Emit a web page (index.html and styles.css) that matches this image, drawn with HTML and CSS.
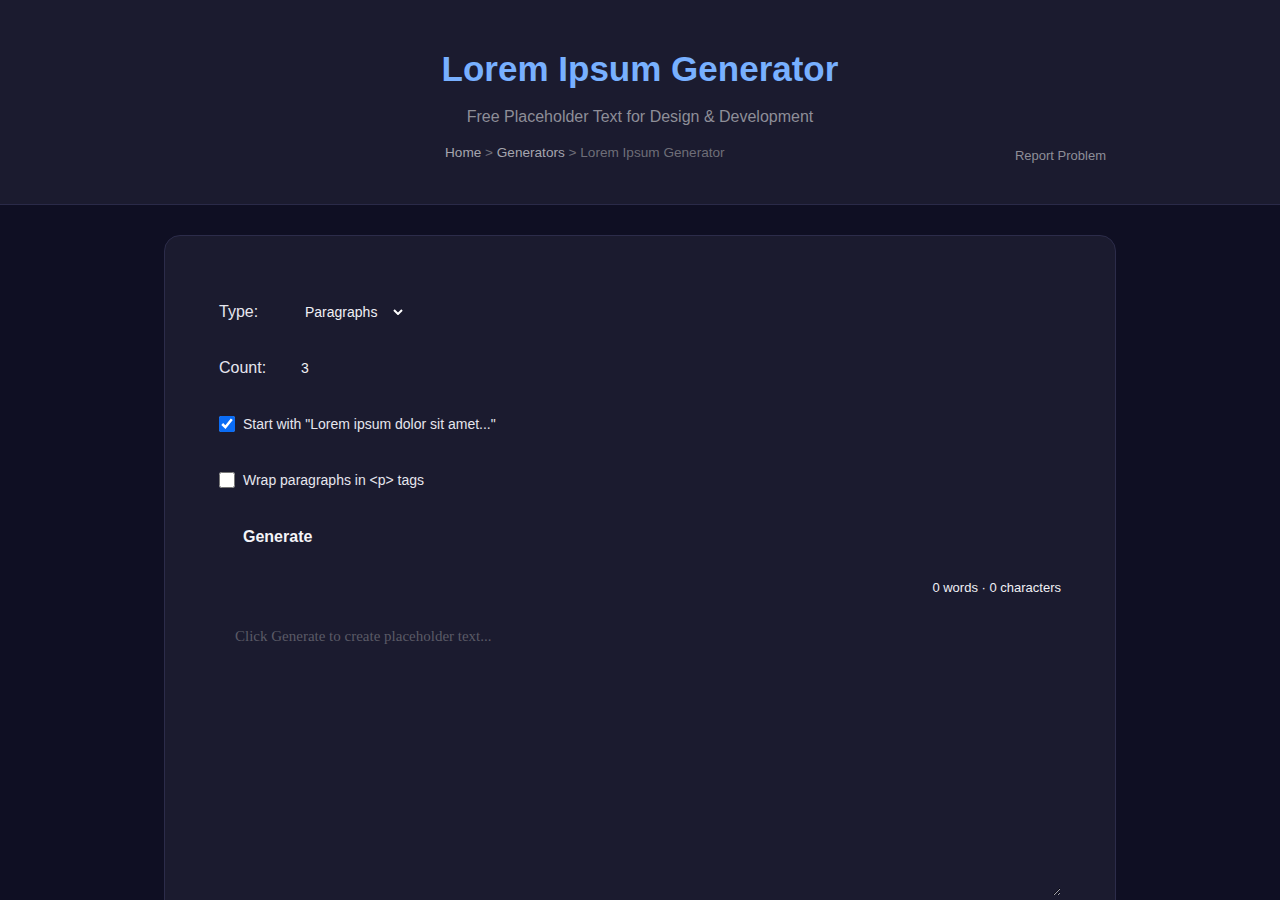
FILE: index.html
```html
<!DOCTYPE html>
<html lang="en">
<head>
    <meta charset="UTF-8">
    <meta name="viewport" content="width=device-width, initial-scale=1.0">
    <title>Lorem Ipsum Generator</title>
    <link rel="stylesheet" href="styles.css">
</head>
<body>
    <header class="site-header">
        <h1>Lorem Ipsum Generator</h1>
        <p class="tagline">Free Placeholder Text for Design &amp; Development</p>
        <div class="header-bar">
            <nav class="breadcrumb">
                <a href="#">Home</a> &gt; <a href="#">Generators</a> &gt; <span>Lorem Ipsum Generator</span>
            </nav>
            <a href="#" class="report-link">Report Problem</a>
        </div>
    </header>

    <main class="container">
        <div class="form-group">
            <label for="type">Type:</label>
            <select id="type">
                <option value="paragraphs">Paragraphs</option>
                <option value="sentences">Sentences</option>
                <option value="words">Words</option>
            </select>
        </div>
        <div class="form-group">
            <label for="count">Count:</label>
            <input type="number" id="count" value="3" min="1" max="50">
        </div>
        <div class="form-group check">
            <input type="checkbox" id="startLorem" checked>
            <label for="startLorem">Start with "Lorem ipsum dolor sit amet..."</label>
        </div>
        <div class="form-group check">
            <input type="checkbox" id="wrapTags">
            <label for="wrapTags">Wrap paragraphs in &lt;p&gt; tags</label>
        </div>
        <button class="generate-btn" onclick="generate()">Generate</button>
        <div class="stats" id="stats">0 words · 0 characters</div>
        <textarea id="output" placeholder="Click Generate to create placeholder text..."></textarea>
    </main>

    <script>
        var words = 'lorem ipsum dolor sit amet consectetur adipiscing elit sed do eiusmod tempor incididunt ut labore et dolore magna aliqua'.split(' ');

        function sentence() {
            var n = 8 + Math.floor(Math.random() * 8);
            var out = [];
            for (var i = 0; i < n; i++) out.push(words[Math.floor(Math.random() * words.length)]);
            var s = out.join(' ');
            return s.charAt(0).toUpperCase() + s.slice(1) + '.';
        }

        function generate() {
            var type = document.getElementById('type').value;
            var count = parseInt(document.getElementById('count').value) || 1;
            var parts = [];
            for (var i = 0; i < count; i++) {
                if (type === 'words') parts.push(words[i % words.length]);
                else if (type === 'sentences') parts.push(sentence());
                else parts.push([sentence(), sentence(), sentence(), sentence()].join(' '));
            }
            if (document.getElementById('startLorem').checked && parts.length) {
                parts[0] = 'Lorem ipsum dolor sit amet, ' + parts[0].toLowerCase();
            }
            if (type === 'paragraphs' && document.getElementById('wrapTags').checked) {
                parts = parts.map(function (p) { return '<p>' + p + '</p>'; });
            }
            var text = parts.join(type === 'paragraphs' ? '\n\n' : ' ');
            document.getElementById('output').value = text;
            var wc = text.trim() ? text.trim().split(/\s+/).length : 0;
            document.getElementById('stats').textContent = wc + ' words · ' + text.length + ' characters';
        }
    </script>
</body>
</html>
```

FILE: styles.css
```css
body {
    font-family: "Liberation Sans", Arial, sans-serif;
    margin: 0;
    padding: 0;
    background-color: #0f0f23;
    color: #e6e6ee;
}

.site-header {
    background-color: #1b1b2f;
    border-bottom: 1px solid #2a2a48;
    padding: 47px 174px 40px;
    text-align: center;
}

.site-header h1 {
    margin: 0;
    font-size: 35px;
    font-weight: bold;
    color: #78b0ff;
    line-height: 44px;
}

.tagline {
    margin: 16px 0 0;
    font-size: 16px;
    color: #8e8e98;
    line-height: 20px;
}

.header-bar {
    display: flex;
    justify-content: space-between;
    align-items: flex-start;
    margin-top: 18px;
    padding-left: 271px;
}

.breadcrumb {
    font-size: 13.6px;
    line-height: 16px;
    color: #6e6e78;
}

.breadcrumb a {
    color: #a5a5ae;
    text-decoration: none;
}

.report-link {
    margin-top: 3px;
    font-size: 13px;
    line-height: 16px;
    color: #8e8e98;
    text-decoration: none;
}

.container {
    width: 952px;
    box-sizing: border-box;
    margin: 30px auto 0;
    background-color: #1b1b2f;
    border: 1px solid #2c2c4a;
    border-radius: 16px;
    padding: 60px 54px 40px;
}

.form-group {
    display: flex;
    align-items: center;
    height: 32px;
    margin-bottom: 24px;
}

.form-group label {
    width: 70px;
    font-size: 16px;
    color: #e6e6ee;
}

select {
    appearance: none;
    -webkit-appearance: none;
    background: transparent url("data:image/svg+xml,%3Csvg xmlns='http://www.w3.org/2000/svg' width='10' height='6' viewBox='0 0 10 6'%3E%3Cpath d='M1 1l4 4 4-4' fill='none' stroke='%23ffffff' stroke-width='2'/%3E%3C/svg%3E") no-repeat right 7px center;
    border: none;
    color: #f0f0f5;
    font-family: inherit;
    font-size: 14px;
    padding: 6px 32px 6px 16px;
}

select option {
    background-color: #1b1b2f;
}

input[type="number"] {
    background: transparent;
    border: none;
    color: #f0f0f5;
    font-family: inherit;
    font-size: 14px;
    padding: 6px 12px;
    width: 60px;
    -moz-appearance: textfield;
}

input[type="number"]::-webkit-inner-spin-button,
input[type="number"]::-webkit-outer-spin-button {
    -webkit-appearance: none;
    margin: 0;
}

.form-group.check label {
    width: auto;
    font-size: 14px;
}

.check input[type="checkbox"] {
    width: 16px;
    height: 16px;
    margin: 0 8px 0 0;
    accent-color: #0a6cf5;
}

.generate-btn {
    display: block;
    background: transparent;
    border: none;
    color: #f4f4f8;
    font-family: inherit;
    font-size: 16px;
    font-weight: bold;
    padding: 8px 24px;
    height: 32px;
    cursor: pointer;
}

.stats {
    text-align: right;
    font-size: 13px;
    color: #f0f0f5;
    margin-top: 28px;
    line-height: 16px;
}

textarea {
    display: block;
    width: 100%;
    box-sizing: border-box;
    height: 276px;
    margin-top: 24px;
    background: transparent;
    border: none;
    color: #e6e6ee;
    font-family: "Liberation Serif", "Times New Roman", serif;
    font-size: 15px;
    line-height: 1.6;
    padding: 4px 16px;
}

textarea::placeholder {
    color: #5a5a66;
}

textarea:focus,
select:focus,
input:focus {
    outline: none;
}
```
